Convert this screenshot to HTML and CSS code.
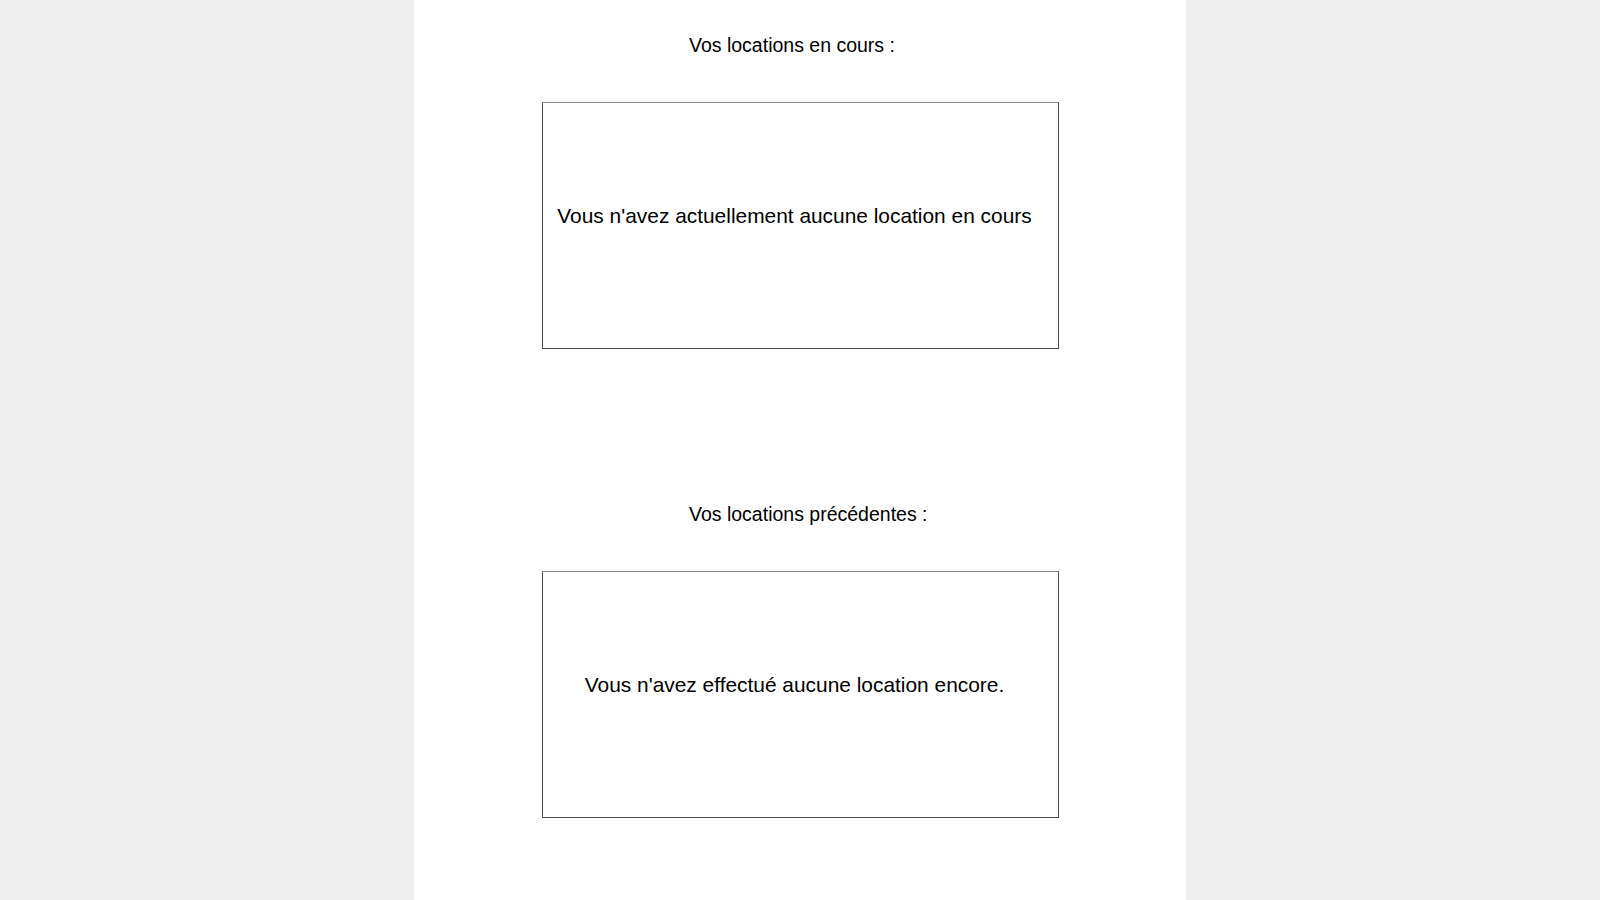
FILE: index.html
```html
<!DOCTYPE html>
<html lang="fr">
<head>
<meta charset="utf-8">
<title>Mes locations</title>
<link rel="stylesheet" href="styles.css">
</head>
<body>
<div class="page">
  <main class="column">
    <section class="rentals">
      <h2 class="rentals-title">Vos locations en cours :</h2>
      <div class="rentals-box">
        <p class="rentals-empty">Vous n'avez actuellement aucune location en cours</p>
      </div>
    </section>
    <section class="rentals">
      <h2 class="rentals-title">Vos locations précédentes :</h2>
      <div class="rentals-box">
        <p class="rentals-empty">Vous n'avez effectué aucune location encore.</p>
      </div>
    </section>
  </main>
</div>
</body>
</html>
```
FILE: styles.css
```css
html {
  background: #eeeeee;
}

body {
  margin: 0;
  font-family: "Liberation Sans", Arial, sans-serif;
  color: #000;
}

.page {
  width: 100vw;
}

.column {
  width: 772px;
  min-height: 900px;
  margin: 0 auto;
  padding-top: 34px;
  box-sizing: border-box;
  background: #ffffff;
}

.rentals + .rentals {
  margin-top: 154px;
}

.rentals-title {
  margin: 0 0 46px 275px;
  font-size: 19.5px;
  line-height: 22px;
  font-weight: normal;
}

.rentals-box {
  width: 517px;
  height: 247px;
  box-sizing: border-box;
  margin: 0 auto;
  padding: 101px 11px 0 0;
  border: 1px solid #4a4a4a;
  border-top-color: #8a8a8a;
  text-align: center;
}

.rentals-empty {
  margin: 0;
  font-size: 20.9px;
  line-height: 24px;
}
```
